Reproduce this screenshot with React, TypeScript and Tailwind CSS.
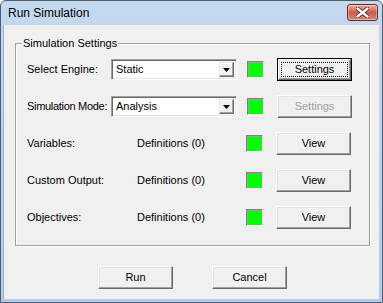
import type { ReactNode } from 'react';

const font = { fontFamily: '"Liberation Sans", Arial, sans-serif' };

function Button({
  children,
  isDefault,
  disabled,
}: {
  children: ReactNode;
  isDefault?: boolean;
  disabled?: boolean;
}) {
  if (isDefault) {
    return (
      <div className="w-[75px] h-[23px] border border-black flex">
        <div className="flex-1 flex items-center justify-center bg-[#f0f0f0] border border-t-white border-l-white border-b-[#696969] border-r-[#696969] shadow-[inset_-1px_-1px_0_#a0a0a0,inset_1px_1px_0_#e3e3e3] p-[2px]">
          <div className="w-full h-full flex items-center justify-center border border-dotted border-black text-black">
            {children}
          </div>
        </div>
      </div>
    );
  }
  return (
    <div
      className={
        'w-[75px] h-[23px] flex items-center justify-center bg-[#f0f0f0] border border-t-white border-l-white border-b-[#696969] border-r-[#696969] shadow-[inset_-1px_-1px_0_#a0a0a0,inset_1px_1px_0_#e3e3e3] ' +
        (disabled ? 'text-[#a0a0a0]' : 'text-black')
      }
    >
      {children}
    </div>
  );
}

function Dropdown({ value }: { value: string }) {
  return (
    <div className="w-[126px] h-[21px] flex bg-white border border-t-[#a0a0a0] border-l-[#a0a0a0] border-b-white border-r-white shadow-[inset_1px_1px_0_#696969,inset_-1px_-1px_0_#e3e3e3] p-[2px]">
      <div className="flex-1 flex items-center pl-[2px] text-black">{value}</div>
      <div className="w-[15px] h-full flex items-center justify-center bg-[#f0f0f0] border border-t-[#e3e3e3] border-l-[#e3e3e3] border-b-[#696969] border-r-[#696969] shadow-[inset_-1px_-1px_0_#a0a0a0,inset_1px_1px_0_#fff]">
        <svg width="7" height="4" viewBox="0 0 7 4">
          <path d="M0 0h7L3.5 4z" fill="#000" />
        </svg>
      </div>
    </div>
  );
}

function Led() {
  return (
    <div className="w-[17px] h-[17px] bg-[#00ff00] border border-t-[#808080] border-l-[#808080] border-b-white border-r-white shadow-[inset_1px_1px_0_#a0a0a0]" />
  );
}

function Row({ children }: { children: ReactNode }) {
  return <div className="h-[23px] flex items-center">{children}</div>;
}

export default function App() {
  return (
    <div
      className="w-[383px] h-[303px] flex flex-col rounded-t-[6px] border border-[#4e5c6c] bg-gradient-to-b from-[#c4d9ef] to-[#b3cce8] text-[11px] overflow-hidden"
      style={font}
    >
      {/* Title bar */}
      <div className="h-[24px] flex items-center justify-between pl-[7px] pr-[4px]">
        <span className="text-[12px] text-black">Run Simulation</span>
        <div className="w-[31px] h-[17px] mt-[-2px] rounded-[3px] border border-[#6e2b2b] bg-gradient-to-b from-[#eab1a2] via-[#cc5b4b] to-[#d98a78] flex items-center justify-center shadow-[inset_0_0_0_1px_rgba(255,255,255,0.35)]">
          <svg width="13" height="11" viewBox="0 0 13 11">
            <path
              d="M1.5 1.5 L11.5 9.5 M11.5 1.5 L1.5 9.5"
              stroke="#4a1a1a"
              strokeWidth="4"
              strokeLinecap="round"
            />
            <path
              d="M1.5 1.5 L11.5 9.5 M11.5 1.5 L1.5 9.5"
              stroke="#fff"
              strokeWidth="2.4"
              strokeLinecap="round"
            />
          </svg>
        </div>
      </div>

      {/* Client area */}
      <div className="flex-1 mx-[2px] mb-[3px] mr-[3px] bg-[#f0f0f0] border-l border-[#8fb2d8] flex flex-col pl-[11px]">
        {/* Group box */}
        <div className="relative mt-[18px] w-[355px] h-[203px] border border-[#a0a0a0] shadow-[1px_1px_0_#fff,inset_1px_1px_0_#fff] pt-[14px] pl-[11px] flex flex-col gap-[14px] text-black">
          <span className="absolute left-[6px] top-[-8px] bg-[#f0f0f0] px-[1px] leading-[14px]">
            Simulation Settings
          </span>
          <Row>
            <span className="w-[84px]">Select Engine:</span>
            <Dropdown value="Static" />
            <div className="ml-[10px]">
              <Led />
            </div>
            <div className="ml-[13px]">
              <Button isDefault>Settings</Button>
            </div>
          </Row>
          <Row>
            <span className="w-[84px] tracking-[-0.3px]">Simulation Mode:</span>
            <Dropdown value="Analysis" />
            <div className="ml-[10px]">
              <Led />
            </div>
            <div className="ml-[13px]">
              <Button disabled>Settings</Button>
            </div>
          </Row>
          {['Variables:', 'Custom Output:', 'Objectives:'].map((label) => (
            <Row key={label}>
              <span className="w-[110px]">{label}</span>
              <span className="w-[109px]">Definitions (0)</span>
              <Led />
              <div className="ml-[13px]">
                <Button>View</Button>
              </div>
            </Row>
          ))}
        </div>

        {/* Bottom buttons */}
        <div className="mt-[20px] ml-[83px] flex gap-[39px]">
          <Button>Run</Button>
          <Button>Cancel</Button>
        </div>
      </div>
    </div>
  );
}
